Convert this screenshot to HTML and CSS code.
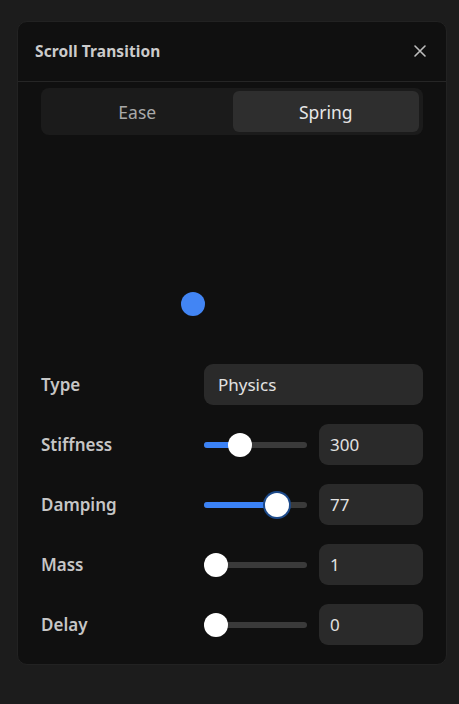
FILE: index.html
```html
<!DOCTYPE html>
<html>
<head>
<meta charset="utf-8">
<link rel="stylesheet" href="styles.css">
</head>
<body>
<div class="panel">
  <div class="header">
    <div class="title">Scroll Transition</div>
    <div class="close">
      <svg width="14" height="14" viewBox="0 0 14 14"><path d="M2 2L12 12M12 2L2 12" stroke="#bdbdbd" stroke-width="1.6" stroke-linecap="round"/></svg>
    </div>
  </div>
  <div class="body">
    <div class="segmented">
      <div class="seg">Ease</div>
      <div class="seg active">Spring</div>
    </div>
    <div class="preview">
      <div class="dot"></div>
    </div>
    <div class="rows">
      <div class="row">
        <div class="label">Type</div>
        <div class="select">Physics</div>
      </div>
      <div class="row">
        <div class="label">Stiffness</div>
        <div class="ctrl">
          <div class="slider"><div class="fill" style="width:36px"></div><div class="thumb" style="left:24px"></div></div>
          <div class="input">300</div>
        </div>
      </div>
      <div class="row">
        <div class="label">Damping</div>
        <div class="ctrl">
          <div class="slider"><div class="fill" style="width:73px"></div><div class="thumb focus" style="left:61px"></div></div>
          <div class="input">77</div>
        </div>
      </div>
      <div class="row">
        <div class="label">Mass</div>
        <div class="ctrl">
          <div class="slider"><div class="fill" style="width:0px"></div><div class="thumb" style="left:0px"></div></div>
          <div class="input">1</div>
        </div>
      </div>
      <div class="row">
        <div class="label">Delay</div>
        <div class="ctrl">
          <div class="slider"><div class="fill" style="width:0px"></div><div class="thumb" style="left:0px"></div></div>
          <div class="input">0</div>
        </div>
      </div>
    </div>
  </div>
</div>
</body>
</html>
```

FILE: styles.css
```css
html, body {
  margin: 0;
  padding: 0;
  background: #1c1c1c;
  font-family: "Noto Sans", "DejaVu Sans", sans-serif;
}
body {
  padding: 21px 0 0 17px;
  height: 704px;
  box-sizing: border-box;
}
.panel {
  width: 430px;
  box-sizing: border-box;
  background: #101010;
  border: 1px solid #222;
  border-radius: 10px;
}
.header {
  height: 59px;
  display: flex;
  align-items: center;
  justify-content: space-between;
  padding: 0 19px 0 17px;
  border-bottom: 1px solid #262626;
}
.title {
  color: #cbcbcb;
  font-size: 15.5px;
  font-weight: 700;
  letter-spacing: 0.1px;
  margin-top: -2px;
}
.close {
  display: flex;
  width: 14px;
  height: 14px;
  margin-top: -2px;
}
.body {
  padding: 6px 23px 19px 23px;
}
.segmented {
  display: flex;
  gap: 2px;
  padding: 3px 4px 3px 3px;
  height: 47px;
  box-sizing: border-box;
  background: #1b1b1b;
  border-radius: 8px;
}
.seg {
  flex: 1;
  display: flex;
  align-items: center;
  justify-content: center;
  font-size: 17.5px;
  color: #a9a9a9;
  border-radius: 6px;
}
.seg.active {
  background: #2e2e2e;
  color: #e6e6e6;
}
.preview {
  position: relative;
  height: 209px;
}
.dot {
  position: absolute;
  left: 140px;
  top: 157px;
  width: 24px;
  height: 24px;
  border-radius: 50%;
  background: #4285f4;
}
.rows {
  display: flex;
  flex-direction: column;
  gap: 19px;
  margin-top: 20px;
}
.row {
  display: grid;
  grid-template-columns: 163px 1fr;
  align-items: center;
  height: 41px;
}
.label {
  color: #c6c6c6;
  font-size: 17px;
  font-weight: 600;
}
.select, .input {
  height: 41px;
  box-sizing: border-box;
  background: #2a2a2a;
  border-radius: 9px;
  color: #e2e2e2;
  font-size: 17px;
  display: flex;
  align-items: center;
}
.select { padding-left: 14px; }
.input { padding-left: 11px; width: 104px; }
.ctrl {
  display: flex;
  align-items: center;
  gap: 12px;
}
.slider {
  position: relative;
  width: 103px;
  height: 6px;
  border-radius: 3px;
  background: #3a3a3a;
}
.fill {
  position: absolute;
  left: 0;
  top: 0;
  height: 6px;
  border-radius: 3px;
  background: #3b82f6;
}
.thumb {
  position: absolute;
  top: -9px;
  width: 24px;
  height: 24px;
  border-radius: 50%;
  background: #fff;
}
.thumb.focus {
  box-shadow: 0 0 0 2px #1d4a8a;
}
```
